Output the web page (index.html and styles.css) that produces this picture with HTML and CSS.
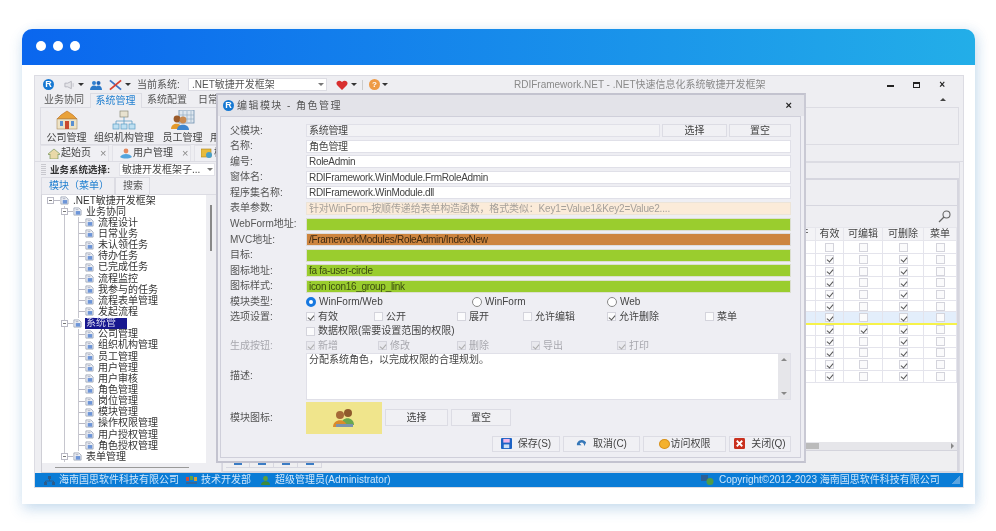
FILE: index.html
```html
<!DOCTYPE html>
<html lang="zh-CN">
<head>
<meta charset="utf-8">
<title>RDIFramework.NET</title>
<link rel="stylesheet" href="styles.css">
</head>
<body>
<div class="card">
  <header class="card-head"><i class="dot"></i><i class="dot"></i><i class="dot"></i></header>
  <div class="card-body">
    <div class="app">
      <div class="titlebar">
        <span class="logo">R</span>
        <svg class="ico speaker" viewBox="0 0 12 10"><path d="M1 3h3l4-2v8L4 7H1z" fill="#e4e4e8" stroke="#b5b5bd"/><path d="M10 3v4" stroke="#c5c5cc"/></svg>
        <i class="caret c1"></i>
        <svg class="ico people" viewBox="0 0 12 10"><circle cx="4" cy="3" r="2" fill="#2f7fd0"/><circle cx="8.5" cy="3" r="2" fill="#1f63b5"/><path d="M0 10c0-6 8-6 8 0zM5 10c0-6 7-6 7 0z" fill="#2a78c8"/></svg>
        <svg class="ico tools" viewBox="0 0 14 12"><path d="M1 1l12 10" stroke="#3f73c4" stroke-width="2"/><path d="M13 1L1 11" stroke="#d84030" stroke-width="2"/></svg>
        <i class="caret c2"></i>
        <span class="sys-label">当前系统:</span>
        <span class="sys-combo">.NET敏捷开发框架<i class="caret gray"></i></span>
        <svg class="ico heart" viewBox="0 0 12 10"><path d="M6 10L1 5C-1 2 3-1 6 2c3-3 7 0 5 3z" fill="#d82f2f"/></svg>
        <i class="caret c3"></i>
        <i class="vsep"></i>
        <span class="help">?</span>
        <i class="caret c4"></i>
        <span class="app-title">RDIFramework.NET - .NET快速信息化系统敏捷开发框架</span>
        <span class="winbtns">
          <i class="w-min"></i><i class="w-max"></i><span class="w-close">×</span>
        </span>
      </div>

      <nav class="menu">
        <span class="menu-item first">业务协同</span>
        <span class="menu-item active">系统管理</span>
        <span class="menu-item">系统配置</span>
        <span class="menu-item">日常</span>
        <i class="collapse"></i>
      </nav>

      <div class="ribbon">
        <div class="rb-item w-a">
          <svg class="rb-icon" viewBox="0 0 24 20"><path d="M2 9l4-4 6-4 6 4 4 4z" fill="#e9a23a" stroke="#b96a1c" stroke-width=".6"/><rect x="2" y="9" width="20" height="10" fill="#eee3c6" stroke="#a98a5a" stroke-width=".6"/><rect x="5" y="11" width="3" height="5" fill="#5a8fd0"/><rect x="16" y="11" width="3" height="5" fill="#5a8fd0"/><rect x="10" y="11" width="4" height="8" fill="#c94a30"/></svg>
          <span>公司管理</span>
        </div>
        <div class="rb-item w-b">
          <svg class="rb-icon" viewBox="0 0 24 20"><g fill="#bfe0f2" stroke="#5b9cc4" stroke-width=".7"><rect x="8" y="1" width="8" height="6" fill="#e8e2cf" stroke="#8c8a78"/><rect x="1" y="14" width="6" height="5"/><rect x="9" y="14" width="6" height="5"/><rect x="17" y="14" width="6" height="5"/></g><path d="M12 7v7M4 14v-3h16v3" fill="none" stroke="#5b9cc4" stroke-width=".8"/></svg>
          <span>组织机构管理</span>
        </div>
        <div class="rb-item w-c">
          <svg class="rb-icon" viewBox="0 0 24 20"><rect x="8" y="0" width="15" height="13" fill="#dfe7ef" stroke="#6d8fae" stroke-width=".8"/><path d="M12 1v11M16 1v11M20 1v11M8 5h15M8 9h15" stroke="#8aa5bd" stroke-width=".6"/><circle cx="6" cy="9" r="3.4" fill="#9a5a2a"/><path d="M0 19c0-7 11-7 11 0z" fill="#e39a2c"/><circle cx="12" cy="10" r="3.4" fill="#c98a50"/><path d="M6 20c0-7 12-7 12 0z" fill="#3f86cf"/></svg>
          <span>员工管理</span>
        </div>
        <div class="rb-item w-d"><span>用</span></div>
      </div>

      <div class="doc-tabs">
        <span class="doc-tab t1">
          <svg class="ico-s" viewBox="0 0 12 11"><path d="M0 6l6-5 6 5-1 1-1-1v5H2V6L1 7z" fill="#e9d9a8" stroke="#7d9a60" stroke-width=".7"/></svg>
          <span class="doc-name">起始页</span><em>×</em>
        </span>
        <span class="doc-tab t2">
          <svg class="ico-s" viewBox="0 0 12 11"><circle cx="6" cy="3" r="2.4" fill="#e58a60"/><path d="M0 9c2-4 10-4 12 0-3 2-9 2-12 0z" fill="#55a5dd"/></svg>
          <span class="doc-name">用户管理</span><em>×</em>
        </span>
        <span class="doc-tab t3">
          <svg class="ico-s" viewBox="0 0 12 11"><rect y="1" width="10" height="8" fill="#e8bb3c" stroke="#a98320" stroke-width=".6"/><circle cx="8" cy="7" r="3" fill="#4aa0c8"/></svg>
          <span class="doc-name">模</span>
        </span>
      </div>

      <div class="work">
        <aside class="left">
          <div class="biz-row">
            <i class="grip"></i>
            <b class="biz-label">业务系统选择:</b>
            <span class="biz-combo">敏捷开发框架子...<i class="caret gray"></i></span>
          </div>
          <div class="left-tabs">
            <span class="ltab active">模块（菜单）</span>
            <span class="ltab">搜索</span>
          </div>
          <div class="tree-wrap">
            <div class="tree">
              <div class="node root"><i class="exp"></i><i class="stub"></i><svg class="doc"><use href="#d"/></svg><span>.NET敏捷开发框架</span></div>
              <div class="branch">
                <div class="node l1"><i class="exp"></i><i class="stub"></i><svg class="doc"><use href="#d"/></svg><span>业务协同</span></div>
                <div class="leaves">
                  <div class="node l2"><i class="stub"></i><svg class="doc"><use href="#d"/></svg><span>流程设计</span></div>
                  <div class="node l2"><i class="stub"></i><svg class="doc"><use href="#d"/></svg><span>日常业务</span></div>
                  <div class="node l2"><i class="stub"></i><svg class="doc"><use href="#d"/></svg><span>未认领任务</span></div>
                  <div class="node l2"><i class="stub"></i><svg class="doc"><use href="#d"/></svg><span>待办任务</span></div>
                  <div class="node l2"><i class="stub"></i><svg class="doc"><use href="#d"/></svg><span>已完成任务</span></div>
                  <div class="node l2"><i class="stub"></i><svg class="doc"><use href="#d"/></svg><span>流程监控</span></div>
                  <div class="node l2"><i class="stub"></i><svg class="doc"><use href="#d"/></svg><span>我参与的任务</span></div>
                  <div class="node l2"><i class="stub"></i><svg class="doc"><use href="#d"/></svg><span>流程表单管理</span></div>
                  <div class="node l2"><i class="stub"></i><svg class="doc"><use href="#d"/></svg><span>发起流程</span></div>
                </div>
                <div class="node l1 sel"><i class="exp"></i><i class="stub"></i><svg class="doc dark"><use href="#d"/></svg><span>系统管</span></div>
                <div class="leaves">
                  <div class="node l2"><i class="stub"></i><svg class="doc"><use href="#d"/></svg><span>公司管理</span></div>
                  <div class="node l2"><i class="stub"></i><svg class="doc"><use href="#d"/></svg><span>组织机构管理</span></div>
                  <div class="node l2"><i class="stub"></i><svg class="doc"><use href="#d"/></svg><span>员工管理</span></div>
                  <div class="node l2"><i class="stub"></i><svg class="doc"><use href="#d"/></svg><span>用户管理</span></div>
                  <div class="node l2"><i class="stub"></i><svg class="doc"><use href="#d"/></svg><span>用户审核</span></div>
                  <div class="node l2"><i class="stub"></i><svg class="doc"><use href="#d"/></svg><span>角色管理</span></div>
                  <div class="node l2"><i class="stub"></i><svg class="doc"><use href="#d"/></svg><span>岗位管理</span></div>
                  <div class="node l2"><i class="stub"></i><svg class="doc"><use href="#d"/></svg><span>模块管理</span></div>
                  <div class="node l2"><i class="stub"></i><svg class="doc"><use href="#d"/></svg><span>操作权限管理</span></div>
                  <div class="node l2"><i class="stub"></i><svg class="doc"><use href="#d"/></svg><span>用户授权管理</span></div>
                  <div class="node l2"><i class="stub"></i><svg class="doc"><use href="#d"/></svg><span>角色授权管理</span></div>
                </div>
                <div class="node l1"><i class="exp"></i><i class="stub"></i><svg class="doc"><use href="#d"/></svg><span>表单管理</span></div>
              </div>
              <i class="h-scroll"></i>
            </div>
            <i class="v-scroll"></i>
          </div>
        </aside>

        <section class="right">
          <div class="right-top"></div>
          <div class="right-box">
            <div class="filter"></div>
            <div class="searchbar">
              <svg class="search" viewBox="0 0 13 13"><circle cx="8.5" cy="4.5" r="3.5" fill="none" stroke="#666" stroke-width="1.1"/><path d="M6 7l-5 5" stroke="#666" stroke-width="1.3"/></svg>
            </div>
            <div class="grid-area">
              <table class="grid">
                <colgroup><col><col class="c-kai"><col class="c-yx"><col class="c-bj"><col class="c-sc"><col class="c-cd"></colgroup>
                <thead><tr><th></th><th>展开</th><th>有效</th><th>可编辑</th><th>可删除</th><th>菜单</th></tr></thead>
                <tbody>
                  <tr><td></td><td><i class="cb"></i></td><td><i class="cb"></i></td><td><i class="cb"></i></td><td><i class="cb"></i></td><td><i class="cb"></i></td></tr>
                  <tr><td></td><td><i class="cb"></i></td><td><i class="cb on"></i></td><td><i class="cb"></i></td><td><i class="cb on"></i></td><td><i class="cb"></i></td></tr>
                  <tr><td></td><td><i class="cb"></i></td><td><i class="cb on"></i></td><td><i class="cb"></i></td><td><i class="cb on"></i></td><td><i class="cb"></i></td></tr>
                  <tr><td></td><td><i class="cb"></i></td><td><i class="cb on"></i></td><td><i class="cb"></i></td><td><i class="cb on"></i></td><td><i class="cb"></i></td></tr>
                  <tr><td></td><td><i class="cb"></i></td><td><i class="cb on"></i></td><td><i class="cb"></i></td><td><i class="cb on"></i></td><td><i class="cb"></i></td></tr>
                  <tr><td></td><td><i class="cb"></i></td><td><i class="cb on"></i></td><td><i class="cb"></i></td><td><i class="cb on"></i></td><td><i class="cb"></i></td></tr>
                  <tr class="current"><td></td><td><i class="cb"></i></td><td><i class="cb on"></i></td><td><i class="cb"></i></td><td><i class="cb on"></i></td><td><i class="cb"></i></td></tr>
                  <tr><td></td><td><i class="cb"></i></td><td><i class="cb on"></i></td><td><i class="cb on"></i></td><td><i class="cb on"></i></td><td><i class="cb"></i></td></tr>
                  <tr><td></td><td><i class="cb"></i></td><td><i class="cb on"></i></td><td><i class="cb"></i></td><td><i class="cb on"></i></td><td><i class="cb"></i></td></tr>
                  <tr><td></td><td><i class="cb"></i></td><td><i class="cb on"></i></td><td><i class="cb"></i></td><td><i class="cb on"></i></td><td><i class="cb"></i></td></tr>
                  <tr><td></td><td><i class="cb"></i></td><td><i class="cb on"></i></td><td><i class="cb"></i></td><td><i class="cb on"></i></td><td><i class="cb"></i></td></tr>
                  <tr><td></td><td><i class="cb"></i></td><td><i class="cb on"></i></td><td><i class="cb"></i></td><td><i class="cb on"></i></td><td><i class="cb"></i></td></tr>
                </tbody>
              </table>
            </div>
            <div class="grid-scroll"><i class="thumb"></i><i class="sc-right"></i></div>
            <div class="pager">
              <span class="pg"><i></i></span><span class="pg"><i></i></span><span class="pg"><i></i></span><span class="pg"><i></i></span>
            </div>
          </div>
        </section>
      </div>

      <footer class="status">
        <svg class="st-ico" viewBox="0 0 11 9"><rect x="4" width="3" height="3" fill="#2a5c8c"/><rect y="6" width="3" height="3" fill="#2a5c8c"/><rect x="8" y="6" width="3" height="3" fill="#2a5c8c"/><path d="M5.5 3v2M1.5 6V5h8v1" stroke="#2a5c8c" fill="none"/></svg>
        <span class="st-a">海南国思软件科技有限公司</span>
        <svg class="st-ico" viewBox="0 0 11 9"><rect width="3" height="4" y="1" fill="#d0483a"/><rect x="4" width="3" height="4" fill="#5aa24a"/><rect x="8" y="1" width="3" height="4" fill="#d8a030"/><rect y="6" width="11" height="2" fill="#33689c"/></svg>
        <span class="st-b">技术开发部</span>
        <svg class="st-ico" viewBox="0 0 11 9"><circle cx="5.5" cy="2.5" r="2.4" fill="#5da03c"/><path d="M1 9c0-5 9-5 9 0z" fill="#3d8a3a"/></svg>
        <span class="st-c">超级管理员(Administrator)</span>
        <svg class="st-ico copy" viewBox="0 0 13 10"><rect width="7" height="6" fill="#2b5f96"/><circle cx="9" cy="6.5" r="3.5" fill="#4f9c46"/></svg>
        <span class="st-d">Copyright©2012-2023 海南国思软件科技有限公司</span>
        <i class="st-grip"></i>
      </footer>

      <div class="dialog">
        <div class="dlg-title">
          <span class="logo">R</span>
          <span class="dlg-name">编辑模块 - 角色管理</span>
          <span class="dlg-close">×</span>
        </div>
        <div class="dlg-body">
          <div class="fields">
            <label>父模块:</label>
            <div class="with-btns"><span class="inp ro">系统管理</span><span class="btn b-sel">选择</span><span class="btn b-clr">置空</span></div>
            <label>名称:</label><span class="inp">角色管理</span>
            <label>编号:</label><span class="inp">RoleAdmin</span>
            <label>窗体名:</label><span class="inp">RDIFramework.WinModule.FrmRoleAdmin</span>
            <label>程序集名称:</label><span class="inp">RDIFramework.WinModule.dll</span>
            <label>表单参数:</label><span class="inp hint">针对WinForm-按顺传递给表单构造函数，格式类似：Key1=Value1&amp;Key2=Value2....</span>
            <label>WebForm地址:</label><span class="inp green"></span>
            <label>MVC地址:</label><span class="inp brown">/FrameworkModules/RoleAdmin/IndexNew</span>
            <label>目标:</label><span class="inp green"></span>
            <label>图标地址:</label><span class="inp green">fa fa-user-circle</span>
            <label>图标样式:</label><span class="inp green">icon icon16_group_link</span>
          </div>
          <div class="opts">
            <label>模块类型:</label>
            <div class="line radios">
              <span class="opt"><i class="radio on"></i>WinForm/Web</span>
              <span class="opt"><i class="radio"></i>WinForm</span>
              <span class="opt"><i class="radio"></i>Web</span>
            </div>
            <label>选项设置:</label>
            <div class="line checks">
              <span class="opt"><i class="cb on"></i>有效</span>
              <span class="opt"><i class="cb"></i>公开</span>
              <span class="opt"><i class="cb"></i>展开</span>
              <span class="opt"><i class="cb"></i>允许编辑</span>
              <span class="opt"><i class="cb on"></i>允许删除</span>
              <span class="opt"><i class="cb"></i>菜单</span>
            </div>
            <label></label>
            <div class="line"><span class="opt"><i class="cb"></i>数据权限(需要设置范围的权限)</span></div>
            <label class="muted">生成按钮:</label>
            <div class="line gens muted">
              <span class="opt"><i class="cb on dis"></i>新增</span>
              <span class="opt"><i class="cb on dis"></i>修改</span>
              <span class="opt"><i class="cb on dis"></i>删除</span>
              <span class="opt"><i class="cb on dis"></i>导出</span>
              <span class="opt"><i class="cb on dis"></i>打印</span>
            </div>
          </div>
          <div class="desc-row">
            <label>描述:</label>
            <div class="desc">
              <span class="desc-text">分配系统角色，以完成权限的合理规划。</span>
              <span class="desc-scroll"><i class="up"></i><i class="down"></i></span>
            </div>
          </div>
          <div class="icon-row">
            <label>模块图标:</label>
            <div class="icon-box">
              <svg class="big-ico" viewBox="0 0 22 20"><circle cx="15" cy="5" r="4" fill="#8f5a2c"/><path d="M8 17c0-9 13-9 13 0z" fill="#6aa84f"/><circle cx="7" cy="7" r="4" fill="#a56a38"/><path d="M0 19c0-9 14-9 14 0z" fill="#d98b2b"/><path d="M3 16h17v3H3z" fill="#7b93ad"/></svg>
            </div>
            <span class="btn b-isel">选择</span>
            <span class="btn b-iclr">置空</span>
          </div>
          <div class="actions">
            <span class="btn act a1"><svg class="act-ico" viewBox="0 0 12 12"><rect width="12" height="12" rx="1" fill="#1d63c5"/><rect x="2.5" y="1" width="7" height="4" fill="#f3b7e8"/><rect x="3" y="7" width="6" height="4" fill="#cfe0f5"/></svg>保存(S)</span>
            <span class="btn act a2"><svg class="act-ico" viewBox="0 0 12 12"><path d="M1 6c2-5 8-5 10-1l-2 4c0-4-3-5-5-3l2 2H1z" fill="#3577b8"/></svg>取消(C)</span>
            <span class="btn act a3"><i class="ball"></i>访问权限</span>
            <span class="btn act a4"><svg class="act-ico" viewBox="0 0 12 12"><rect width="12" height="12" rx="1.5" fill="#c9301e"/><path d="M3 3l6 6M9 3l-6 6" stroke="#fff" stroke-width="2"/></svg>关闭(Q)</span>
          </div>
        </div>
      </div>
    </div>
  </div>
</div>
<svg class="defs" width="0" height="0"><symbol id="d" viewBox="0 0 10 9"><path d="M1 .5h5.5L9 3v5.5H1z" fill="#eef0f6" stroke="#8f98aa" stroke-width=".8"/><rect x="3" y="4" width="5" height="4" fill="#6d95d8"/><path d="M3 2.5h3" stroke="#a5adbc"/></symbol></svg>
</body>
</html>
```
FILE: styles.css
```css
* { box-sizing: border-box; }
html, body { margin: 0; height: 100%; background: #fff; overflow: hidden; }
body { font: 10px/1 "Liberation Sans", "Noto Sans CJK SC", sans-serif; color: #444; padding: 29px 21px 27px 22px; }
i, em { font-style: normal; display: block; flex: none; }
.defs { position: absolute; }

.card { height: 475px; background: #fff; border-radius: 10px 10px 0 0; box-shadow: 0 6px 14px rgba(40, 120, 190, .2), 4px 0 12px rgba(40, 120, 190, .1); display: flex; flex-direction: column; }
.card-head { height: 36px; flex: none; background: linear-gradient(90deg, #0a66ee, #23aee8); border-radius: 10px 10px 0 0; display: flex; align-items: center; gap: 7px; padding: 0 0 2px 14px; }
.dot { width: 10px; height: 10px; border-radius: 50%; background: #fff; }
.card-body { flex: 1; padding: 10px 11px 16px 12px; display: flex; }

.app { flex: 1; position: relative; background: #eeeef2; border: 1px solid #dcdce3; display: flex; flex-direction: column; filter: blur(.4px); overflow: hidden; }

.titlebar { height: 17px; flex: none; display: flex; align-items: center; padding-left: 8px; position: relative; }
.logo { width: 11px; height: 11px; flex: none; border-radius: 50%; background: #1678d2; color: #fff; font: bold 9px/11px "Liberation Sans", sans-serif; text-align: center; }
.ico { display: block; flex: none; }
.speaker { width: 11px; height: 10px; margin-left: 10px; }
.people { width: 12px; height: 10px; margin-left: 6px; }
.tools { width: 13px; height: 12px; margin-left: 7px; }
.heart { width: 12px; height: 10px; margin-left: 9px; }
.caret { width: 0; height: 0; border: 3px solid transparent; border-top-color: #333; border-bottom: 0; }
.caret.gray { border-top-color: #777; }
.c1 { margin-left: 3px; }
.c2 { margin-left: 3px; }
.c3 { margin-left: 3px; }
.c4 { margin-left: 2px; }
.sys-label { margin-left: 6px; color: #555; width: 45px; }
.sys-combo { margin-left: 6px; width: 139px; height: 13px; background: #fff; border: 1px solid #dcdce3; line-height: 11px; padding-left: 3px; display: flex; align-items: center; justify-content: space-between; padding-right: 2px; color: #555; }
.vsep { width: 1px; height: 10px; background: #ccc; margin: 0 6px 0 5px; }
.help { width: 11px; height: 11px; flex: none; border-radius: 50%; background: #ee9a45; color: #fff; font: bold 8px/11px "Liberation Sans", sans-serif; text-align: center; }
.app-title { position: absolute; left: 479px; top: 4px; color: #8a8a8a; white-space: nowrap; }
.winbtns { margin-left: auto; display: flex; align-items: center; margin-right: 18px; width: 58px; justify-content: space-between; }
.w-min { width: 7px; height: 2px; background: #222; margin-top: 3px; }
.w-max { width: 7px; height: 6px; border: 1px solid #222; border-top-width: 2px; }
.w-close { font: bold 10px/10px "Liberation Sans", sans-serif; color: #222; }

.menu { height: 14px; flex: none; display: flex; align-items: flex-end; padding-left: 9px; position: relative; }
.menu-item { height: 14px; line-height: 13px; color: #555; padding: 0 5.5px; }
.menu-item.first { padding-left: 0; margin-right: 0; }
.menu-item.active { background: #eeeef2; border: 1px solid #dcdce3; border-bottom: 0; color: #1f7fd0; padding: 0 5px; height: 15px; position: relative; z-index: 1; margin-bottom: -1px; }
.collapse { position: absolute; right: 17px; top: 5px; border: 3px solid transparent; border-bottom-color: #444; border-top: 0; }

.ribbon { height: 38px; flex: none; margin: 0 4px 0 5px; border: 1px solid #dcdce3; display: flex; }
.rb-item { display: flex; flex-direction: column; align-items: center; color: #444; padding-top: 2px; white-space: nowrap; }
.w-a { width: 51px; }
.w-b { width: 64px; }
.w-c { width: 53px; }
.w-d { width: 12px; padding-top: 25px; }
.rb-icon { width: 24px; height: 20px; display: block; margin-bottom: 3px; }

.doc-tabs { height: 17px; flex: none; display: flex; align-items: flex-end; padding-left: 5px; gap: 3px; border-bottom: 1px solid #dcdce3; }
.doc-tab { height: 16px; background: #f0f0f4; border: 1px solid #e2e2e8; border-bottom: 0; display: flex; align-items: center; color: #444; padding-bottom: 1px; }
.t1 { width: 69px; padding-left: 7px; }
.t2 { width: 79px; padding-left: 7px; }
.t3 { width: 36px; padding-left: 6px; }
.ico-s { width: 12px; height: 11px; display: block; flex: none; margin-right: 1px; }
.doc-name { width: 39px; white-space: nowrap; }
.t1 .doc-name { width: 29px; }
.t3 .doc-name { width: 10px; }
.t1 em, .t2 em { margin-left: 10px; color: #888; font-size: 11px; }

.work { flex: 1; min-height: 0; display: flex; }
.left { width: 186px; flex: none; display: flex; flex-direction: column; padding-left: 6px; }
.biz-row { height: 15px; flex: none; display: flex; align-items: center; }
.grip { width: 5px; height: 11px; background: repeating-linear-gradient(0deg, #c8c8ce 0 1px, transparent 1px 2px); }
.biz-label { margin-left: 4px; width: 69px; color: #333; font-size: 9.5px; white-space: nowrap; }
.biz-combo { width: 96px; height: 13px; background: #fff; border: 1px solid #e2e2e8; display: flex; align-items: center; justify-content: space-between; padding: 0 1px 0 2px; white-space: nowrap; overflow: hidden; }
.left-tabs { height: 17px; flex: none; display: flex; }
.ltab { border: 1px solid #dcdce3; border-bottom: 0; line-height: 15px; background: #f0f0f4; color: #555; }
.ltab:first-child { width: 74px; padding-left: 7px; color: #1f7fd0; background: #eeeef2; }
.ltab:last-child { width: 35px; padding-left: 7px; }
.tree-wrap { flex: 1; min-height: 0; display: flex; border-left: 1px solid #cfcfd6; border-top: 1px solid #dcdce3; border-bottom: 1px solid #cfcfd6; padding-bottom: 9px; }
.tree { width: 164px; height: 100%; background: #fff; position: relative; overflow: visible; }
.node { height: 11.15px; display: flex; align-items: center; white-space: nowrap; color: #333; }
.exp { width: 7px; height: 7px; border: 1px solid #b9b9c4; background: linear-gradient(#777, #777) center/3px 1px no-repeat #fff; }
.stub { height: 0; border-top: 1px solid #b9b9c4; }
.doc { width: 9px; height: 9px; display: block; flex: none; }
.node span { margin-left: 4px; }
.root { padding-left: 5px; }
.root .stub { width: 6px; }
.branch { margin-left: 22px; border-left: 1px solid #c6c6ce; }
.l1 { margin-left: -4px; }
.l1 .stub { width: 5px; }
.leaves { margin-left: 13px; border-left: 1px solid #c6c6ce; }
.l2 .stub { width: 6px; }
.sel span { background: #17178f; color: #d8d8f0; width: 42px; height: 11px; line-height: 10px; padding-left: 1px; margin-left: 3px; }
.h-scroll { position: absolute; left: 13px; bottom: -5px; width: 134px; height: 1px; background: #999; }
.v-scroll { width: 2px; height: 46px; background: #888; margin: 10px 0 0 4px; }

.right { flex: 1; min-width: 0; margin: 0 3px 0 0; border: 1px solid #dcdce3; border-bottom: 0; display: flex; flex-direction: column; }
.right-top { height: 15px; flex: none; }
.right-box { flex: 1; min-height: 0; border: 2px solid #d6d6df; border-left-width: 1px; display: flex; flex-direction: column; }
.filter { height: 26px; flex: none; border-bottom: 1px solid #d6d6df; }
.searchbar { height: 21px; flex: none; display: flex; justify-content: flex-end; align-items: center; padding-right: 6px; }
.search { width: 13px; height: 13px; display: block; }
.grid-area { flex: 1; min-height: 0; background: #fff; }
.grid { width: 100%; table-layout: fixed; border-collapse: collapse; }
.c-kai { width: 34px; }
.c-yx { width: 28px; }
.c-bj { width: 39px; }
.c-sc { width: 41px; }
.c-cd { width: 33px; }
.grid th { height: 13px; padding: 0; font-weight: 400; line-height: 12px; color: #444; border: 1px solid #e6e6ec; background: #f3f3f6; white-space: nowrap; }
.grid td { height: 11.7px; padding: 0; border: 1px solid #e4e4ec; }
.grid tbody tr:first-child td { height: 13px; }
.grid .cb { margin: 0 auto; }
.current td { background: #e3eefb; border-bottom: 2px solid #f6f24a; }
.cb { width: 9px; height: 9px; background: #fbfbfc; border: 1px solid #d4d4dc; position: relative; }
.cb.on::after { content: ""; position: absolute; left: 2px; top: .5px; width: 3px; height: 5px; border: solid #555; border-width: 0 1px 1px 0; transform: rotate(40deg); }
.cb.dis { background: #e9e9ee; }
.cb.dis::after { border-color: #aaa; }
.grid-scroll { height: 9px; flex: none; background: #e6e6ea; position: relative; display: flex; justify-content: flex-end; align-items: center; padding-right: 3px; border-bottom: 1px solid #d4d4dc; }
.thumb { position: absolute; right: 138px; width: 14px; height: 6px; background: #bbb; }
.sc-right { border: 3px solid transparent; border-left-color: #888; border-right: 0; }
.pager { height: 20px; flex: none; background: #efeff1; display: flex; padding: 9px 0 0 3px; }
.pg { width: 24px; height: 8px; border: 1px solid #d8d8e0; border-left-width: 0; display: flex; justify-content: center; }
.pg i { width: 8px; height: 2px; background: #3b7cc4; margin-top: 2px; }

.status { height: 14px; flex: none; background: #0a7cd6; color: #cfe6fa; display: flex; align-items: center; padding-left: 9px; white-space: nowrap; }
.st-ico { width: 11px; height: 9px; display: block; flex: none; }
.st-a { margin: 0 9px 0 4px; width: 118px; }
.st-b { margin: 0 9px 0 4px; width: 50px; }
.st-c { margin-left: 4px; width: 115px; }
.st-ico.copy { width: 13px; height: 10px; margin-left: auto; }
.st-d { margin-left: 5px; margin-right: 12px; width: 221px; }
.st-grip { width: 8px; height: 8px; margin-right: 3px; background: linear-gradient(135deg, transparent 50%, #5da5e0 50%); }

.dialog { position: absolute; left: 181px; top: 17px; width: 590px; height: 370px; background: #eeeef3; border: 2px solid #c3c3cf; border-right-color: #c9c9d4; display: flex; flex-direction: column; padding: 0 3px 3px 2px; }
.dlg-title { height: 21px; flex: none; margin: 0 -3px 0 -2px; background: #e3e3e9; display: flex; align-items: center; padding: 0 12px 0 5px; }
.dlg-name { margin-left: 3px; color: #555; font-size: 10px; letter-spacing: 1.45px; }
.dlg-close { margin-left: auto; font: bold 11px/11px "Liberation Sans", sans-serif; color: #222; }
.dlg-body { flex: 1; min-height: 0; border: 1px solid #cfcfda; padding: 7px 9px 0 9px; }
.fields { display: grid; grid-template-columns: 76px 1fr; grid-auto-rows: 13px; row-gap: 2.6px; }
label { display: flex; align-items: center; color: #555; white-space: nowrap; }
.inp { height: 13px; background: #fff; border: 1px solid #e0e0e8; display: block; line-height: 11px; padding-left: 2px; color: #444; white-space: nowrap; overflow: hidden; letter-spacing: -.3px; }
.ro { background: #f2f2f5; flex: 1; }
.hint { background: #fbebd9; color: #a5a09a; border-color: #ece4d8; letter-spacing: -.16px; }
.green { background: #9acd2e; border-color: #dcdfd0; color: #3a4a10; }
.brown { background: #cd853f; border-color: #ddd; color: #3f2a10; }
.with-btns { display: flex; gap: 2px; }
.btn { height: 100%; background: #f0f0f4; border: 1px solid #dcdce4; display: flex; align-items: center; justify-content: center; color: #444; white-space: nowrap; flex: none; }
.b-sel { width: 65px; }
.b-clr { width: 62px; }
.opts { display: grid; grid-template-columns: 76px 1fr; margin-top: 2.5px; grid-template-rows: 14px 14px 14px 14px; row-gap: .5px; }
.muted { color: #a8a8ae; }
.line { display: flex; align-items: center; }
.opt { display: flex; align-items: center; gap: 3px; white-space: nowrap; flex: none; }
.radio { width: 10px; height: 10px; border-radius: 50%; border: 1px solid #888; background: #fff; }
.radio.on { border: 3px solid #1678e0; }
.radios .opt:nth-child(1) { width: 166px; }
.radios .opt:nth-child(2) { width: 135px; }
.checks .opt:nth-child(1) { width: 68px; }
.checks .opt:nth-child(2) { width: 83px; }
.checks .opt:nth-child(3) { width: 66px; }
.checks .opt:nth-child(4) { width: 84px; }
.checks .opt:nth-child(5) { width: 98px; }
.gens .opt:nth-child(1) { width: 72px; }
.gens .opt:nth-child(2) { width: 79px; }
.gens .opt:nth-child(3) { width: 74px; }
.gens .opt:nth-child(4) { width: 86px; }
.desc-row { height: 47px; margin-top: 0; display: grid; grid-template-columns: 76px 1fr; flex: none; }
.desc { background: #fff; border: 1px solid #e0e0e8; display: flex; justify-content: space-between; }
.desc-text { padding: 1px 0 0 2px; color: #444; }
.desc-scroll { width: 12px; background: #e6e6ea; display: flex; flex-direction: column; justify-content: space-between; align-items: center; padding: 4px 0; }
.up { border: 3px solid transparent; border-bottom-color: #888; border-top: 0; }
.down { border: 3px solid transparent; border-top-color: #888; border-bottom: 0; }
.icon-row { height: 32px; margin-top: 2px; display: flex; align-items: center; }
.icon-row label { width: 76px; }
.icon-box { width: 76px; height: 32px; background: #f0e58c; display: flex; align-items: center; justify-content: center; flex: none; }
.big-ico { width: 22px; height: 20px; display: block; }
.b-isel { width: 63px; height: 17px; margin-left: 3px; }
.b-iclr { width: 60px; height: 17px; margin-left: 3px; }
.actions { height: 16px; margin-top: 2px; display: flex; justify-content: flex-end; gap: 3px; }
.act { gap: 6px; }
.a1 { width: 68px; }
.a2 { width: 77px; }
.a3 { width: 83px; gap: 1px; }
.a4 { width: 62px; }
.act-ico { width: 11px; height: 11px; display: block; flex: none; }
.ball { width: 11px; height: 10px; border-radius: 50%; background: #f4b12e; border: 1px solid #d8921c; }
```
